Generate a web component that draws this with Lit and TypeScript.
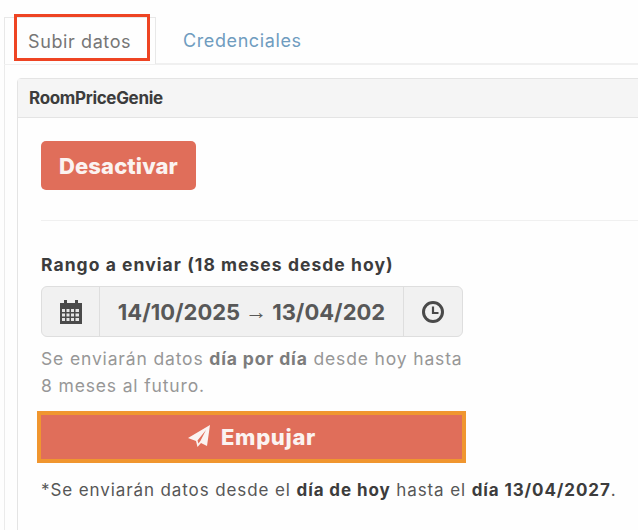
import { LitElement, css, html } from 'lit';
import { customElement } from 'lit/decorators.js';

@customElement('app-root')
export class AppRoot extends LitElement {
  static override styles = css`
    :host {
      display: block;
      width: 638px;
      height: 530px;
      overflow: hidden;
      background: #fefefe;
      font-family: 'Inter', 'Noto Sans', sans-serif;
      color: #3a3a3a;
    }
    .page {
      position: relative;
      height: 530px;
      padding: 17px 0 0 4px;
      box-sizing: border-box;
    }
    .tabs {
      display: flex;
      height: 46px;
      border-bottom: 2px solid #f0f0f0;
      font-size: 18px;
      letter-spacing: 0.6px;
    }
    .tab {
      display: flex;
      align-items: center;
      box-sizing: border-box;
      height: 47px;
      font-weight: 400;
    }
    .tab.active {
      width: 152px;
      padding-left: 23px;
      color: #767676;
      background: #fefefe;
      border: 1px solid #e8e8e8;
      border-bottom: 0;
    }
    .tab.link {
      padding-left: 27px;
      color: #6f9cbf;
    }
    .pane {
      height: 467px;
      padding: 13px 0 0 12px;
      border-left: 1px solid #ebebeb;
      box-sizing: border-box;
    }
    .card {
      width: 640px;
      height: 460px;
      border: 1px solid #e4e4e4;
      border-radius: 4px 0 0 0;
      box-sizing: border-box;
    }
    .card-head {
      display: flex;
      align-items: center;
      height: 38px;
      padding-left: 11px;
      background: #f5f5f5;
      border-bottom: 1px solid #e4e4e4;
      font-size: 17px;
      font-weight: 700;
      letter-spacing: -0.33px;
      color: #3c3c3c;
    }
    .card-body {
      padding: 23px 0 0 23px;
    }
    .off {
      display: flex;
      align-items: center;
      justify-content: center;
      width: 155px;
      height: 49px;
      border-radius: 5px;
      background: #e06e5a;
      color: #fbf3f1;
      font-size: 22px;
      font-weight: 800;
      letter-spacing: 0.1px;
    }
    hr {
      height: 1px;
      margin: 30px 0 0;
      border: 0;
      background: #f0f0f0;
    }
    .label {
      margin-top: 34px;
      font-size: 17.5px;
      line-height: 20px;
      font-weight: 700;
      letter-spacing: 1.05px;
      color: #3c3c3c;
      white-space: nowrap;
    }
    .range {
      display: flex;
      width: 422px;
      height: 51px;
      margin-top: 11px;
      box-sizing: border-box;
      border: 1px solid #dedede;
      border-radius: 6px;
      background: #f1f1f1;
      overflow: hidden;
    }
    .addon {
      display: flex;
      align-items: center;
      justify-content: center;
      flex: none;
      color: #4a4a4a;
    }
    .addon.cal {
      width: 57px;
      border-right: 1px solid #dedede;
    }
    .addon.clock {
      width: 58px;
      border-left: 1px solid #dedede;
    }
    .dates {
      flex: 1;
      display: flex;
      align-items: center;
      justify-content: center;
      font-size: 22px;
      font-weight: 700;
      color: #585858;
      white-space: nowrap;
      overflow: hidden;
    }
    .arrow {
      font-weight: 400;
      font-family: 'Liberation Sans', sans-serif;
      margin: 0 5px;
    }
    .help {
      width: 430px;
      margin-top: 8px;
      font-size: 17.5px;
      letter-spacing: 0.85px;
      line-height: 27px;
      color: #979797;
      white-space: nowrap;
    }
    .help b {
      color: #7c7c7c;
    }
    .push {
      display: flex;
      align-items: center;
      justify-content: center;
      gap: 10px;
      width: 422px;
      height: 45px;
      margin-top: 15px;
      background: #e06e5a;
      color: #fbf3f1;
      font-size: 22px;
      font-weight: 800;
      letter-spacing: 0.7px;
    }
    .note {
      margin-top: 19px;
      font-size: 17px;
      letter-spacing: 0.9px;
      line-height: 24px;
      color: #565656;
      white-space: nowrap;
    }
    .note b {
      color: #3c3c3c;
    }
    .mark {
      position: absolute;
      box-sizing: border-box;
      pointer-events: none;
    }
    .mark.red {
      left: 14px;
      top: 14px;
      width: 136px;
      height: 47px;
      border: 3px solid #ee4423;
    }
    .mark.orange {
      left: 37px;
      top: 411px;
      width: 429px;
      height: 52px;
      border: 4px solid #f0962f;
    }
  `;

  override render() {
    return html`
      <div class="page">
        <nav class="tabs">
          <div class="tab active">Subir datos</div>
          <div class="tab link">Credenciales</div>
        </nav>
        <section class="pane">
          <div class="card">
            <header class="card-head">RoomPriceGenie</header>
            <div class="card-body">
              <div class="off">Desactivar</div>
              <hr />
              <div class="label">Rango a enviar (18 meses desde hoy)</div>
              <div class="range">
                <span class="addon cal">
                  <svg width="22" height="24" viewBox="0 0 22 24">
                    <path
                      fill="currentColor"
                      d="M4 0h3v3h8V0h3v3h4v21H0V3h4z"
                    />
                    <path
                      fill="#e4e4e4"
                      d="M2 9h3v3H2zM6.500 9h3v3h-3zM11 9h3v3h-3zM15.500 9h3.500v3h-3.500zM2 13.500h3v3H2zM6.500 13.500h3v3h-3zM11 13.500h3v3h-3zM15.500 13.500h3.500v3h-3.500zM2 18h3v3H2zM6.500 18h3v3h-3zM11 18h3v3h-3zM15.500 18h3.500v3h-3.500z"
                    />
                  </svg>
                </span>
                <span class="dates">14/10/2025<span class="arrow">→</span>13/04/202</span>
                <span class="addon clock">
                  <svg width="22" height="22" viewBox="0 0 22 22" fill="none" stroke="currentColor">
                    <circle cx="11" cy="11" r="9.500" stroke-width="3" />
                    <path d="M11 5.500v6.500h5.500" stroke-width="2.200" />
                  </svg>
                </span>
              </div>
              <div class="help">
                Se enviarán datos <b>día por día</b> desde hoy hasta<br />8 meses al futuro.
              </div>
              <div class="push">
                <svg width="23" height="23" viewBox="0 0 23 23">
                  <path
                    fill="currentColor"
                    fill-rule="evenodd"
                    d="M22 0 19 21 13 18 9.500 22 8 16 0 13zM18 5 9.500 15.500 10.500 18.500 12.500 15.800z"
                  />
                </svg>
                Empujar
              </div>
              <div class="note">
                *Se enviarán datos desde el <b>día de hoy</b> hasta el <b>día 13/04/2027</b>.
              </div>
            </div>
          </div>
        </section>
        <div class="mark red"></div>
        <div class="mark orange"></div>
      </div>
    `;
  }
}
